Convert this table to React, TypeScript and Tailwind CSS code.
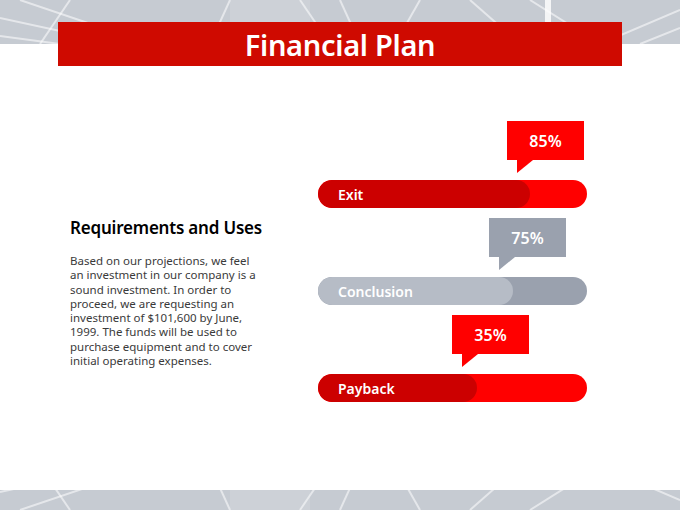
const bars = [
  {
    label: 'Exit',
    value: '85%',
    fill: 212,
    box: 189,
    boxColor: 'bg-[#ff0000]',
    tailColor: 'fill-[#ff0000]',
    track: 'bg-[#ff0000]',
    part: 'bg-[#cc0000]',
  },
  {
    label: 'Conclusion',
    value: '75%',
    fill: 195,
    box: 171,
    boxColor: 'bg-[#9aa1ae]',
    tailColor: 'fill-[#9aa1ae]',
    track: 'bg-[#9aa1ae]',
    part: 'bg-[#b6bcc6]',
  },
  {
    label: 'Payback',
    value: '35%',
    fill: 159,
    box: 134,
    boxColor: 'bg-[#ff0000]',
    tailColor: 'fill-[#ff0000]',
    track: 'bg-[#ff0000]',
    part: 'bg-[#cc0000]',
  },
];

const body = [
  'Based on our projections, we feel',
  'an investment in our company is a',
  'sound investment. In order to',
  'proceed, we are requesting an',
  'investment of $101,600 by June,',
  '1999. The funds will be used to',
  'purchase equipment and to cover',
  'initial operating expenses.',
];

function Band({ h, flip }: { h: number; flip?: boolean }) {
  return (
    <div className="w-full bg-[#c6cbd2]" style={{ height: h }}>
      <svg className="w-full h-full block" viewBox={`0 0 680 ${h}`} preserveAspectRatio="none">
        <g stroke="#ffffff" strokeOpacity="0.55" strokeWidth="2" fill="none" transform={flip ? `translate(0 ${h}) scale(1 -1)` : undefined}>
          <path d="M0 18 L120 44" />
          <path d="M0 36 L60 44" />
          <path d="M20 0 L150 44" />
          <path d="M70 0 L40 44" />
          <path d="M230 0 L210 44" />
          <path d="M300 0 L330 44" />
          <path d="M340 0 L360 44" />
          <path d="M420 0 L395 44" />
          <path d="M470 0 L520 44" />
          <path d="M530 0 L600 44" />
          <path d="M600 44 L680 10" />
          <path d="M640 44 L680 28" />
        </g>
        <rect x="545" y="0" width="6" height={h} fill="#ffffff" fillOpacity={flip ? 0 : 0.8} />
        <rect x="230" y="0" width="80" height={h} fill="#ffffff" fillOpacity="0.12" />
      </svg>
    </div>
  );
}

export default function App() {
  return (
    <div className="w-[680px] h-[510px] bg-white flex flex-col overflow-hidden" style={{ fontFamily: '"Noto Sans", "Open Sans", sans-serif' }}>
      <Band h={44} />
      <div className="relative -mt-[22px] mx-[58px] h-[44px] bg-[#cf0a00] flex items-center justify-center">
        <h1 className="text-white text-[29px] font-semibold leading-none tracking-[-0.3px]">Financial Plan</h1>
      </div>

      <div className="flex flex-1 pt-[55px]">
        <div className="w-[318px] pl-[70px] pt-[97px]">
          <h2 className="text-[17px] font-semibold text-black leading-[20px] whitespace-nowrap tracking-[-0.2px]">Requirements and Uses</h2>
          <p className="mt-[16px] text-[11.5px] leading-[14.3px] text-[#3a3a3a] whitespace-nowrap">
            {body.map((l) => (
              <span key={l} className="block">{l}</span>
            ))}
          </p>
        </div>

        <div className="w-[269px] flex flex-col gap-[10px]">
          {bars.map((b) => (
            <div key={b.label} className="flex flex-col">
              <div style={{ marginLeft: b.box }} className="w-[77px]">
                <div className={`h-[39px] ${b.boxColor} flex items-center justify-center`}>
                  <span className="text-white text-[16px] font-semibold">{b.value}</span>
                </div>
                <svg className="block" width="30" height="13" viewBox="0 0 30 13">
                  <polygon points="10,0 10,13 26,0" className={b.tailColor} />
                </svg>
              </div>
              <div className={`mt-[7px] h-[28px] rounded-full ${b.track} flex overflow-hidden`}>
                <div className={`h-full rounded-full ${b.part} flex items-center pl-[20px]`} style={{ width: b.fill }}>
                  <span className="text-white text-[14px] font-semibold">{b.label}</span>
                </div>
              </div>
            </div>
          ))}
        </div>
      </div>

      <Band h={20} flip />
    </div>
  );
}
